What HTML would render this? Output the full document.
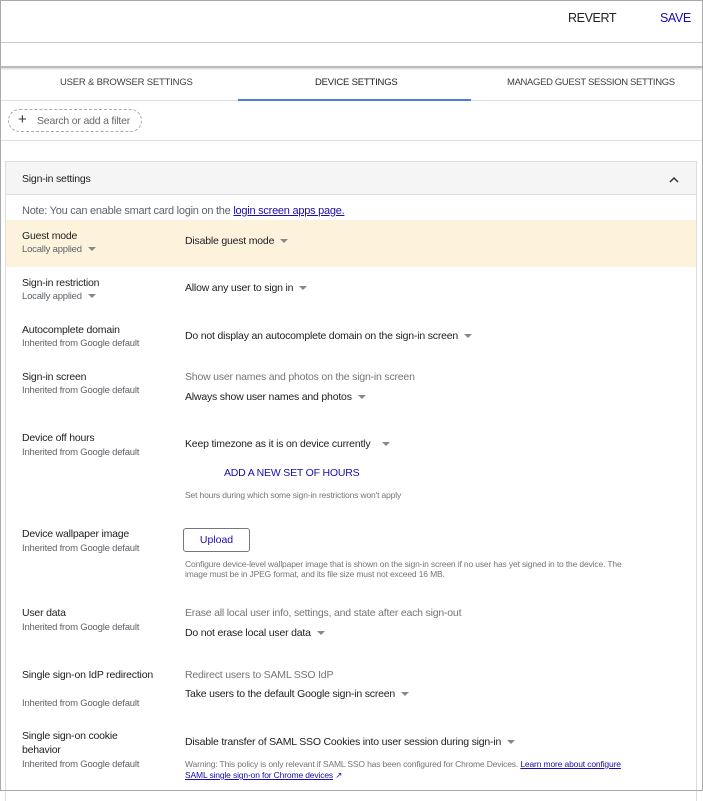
<!DOCTYPE html>
<html><head><style>
*{margin:0;padding:0;box-sizing:border-box}
body{width:703px;height:791px;background:#fff;font-family:"Liberation Sans",Arial,sans-serif;position:relative;overflow:hidden;color:#202124}
.a{position:absolute;white-space:nowrap;line-height:14px;letter-spacing:-0.2px}
.l{font-size:10.5px;color:#202124}
.s{font-size:9.5px;color:#5f6368}
.v{font-size:10.5px;color:#202124}
.g{font-size:10.5px;color:#757575}
.t{font-size:8.5px;color:#757575;letter-spacing:-0.15px}
.ar{display:inline-block;width:0;height:0;border-left:4px solid transparent;border-right:4px solid transparent;border-top:4px solid #888;margin-left:6px;vertical-align:middle}
.tab{font-size:9.5px;color:#3c4043;letter-spacing:-0.2px}
a{color:#1a0dab}
</style></head><body>
<div style="position:absolute;left:0;top:0;width:703px;height:791px;border:1px solid #aaa;z-index:5;pointer-events:none"></div>
<div class="a" style="left:568px;top:11px;font-size:12.5px;color:#202124;letter-spacing:-0.4px">REVERT</div>
<div class="a" style="left:660px;top:11px;font-size:12.5px;color:#1a0dab;letter-spacing:-0.4px">SAVE</div>
<div style="position:absolute;left:1px;top:42px;width:701px;height:1px;background:#ccc"></div>
<div style="position:absolute;left:1px;top:66px;width:701px;height:2px;background:#bbb;box-shadow:0 1px 2px #ccc"></div>
<div class="a tab" style="left:60px;top:76px">USER &amp; BROWSER SETTINGS</div>
<div class="a tab" style="left:315px;top:76px;color:#202124">DEVICE SETTINGS</div>
<div class="a tab" style="left:507px;top:76px;letter-spacing:-0.35px">MANAGED GUEST SESSION SETTINGS</div>
<div style="position:absolute;left:1px;top:100px;width:701px;height:1px;background:#ddd"></div>
<div style="position:absolute;left:238px;top:99px;width:233px;height:2px;background:#4a7fe0"></div>
<div style="position:absolute;left:8px;top:109px;width:134px;height:23px;border:1px dashed #aaa;border-radius:12px"></div>
<div class="a" style="left:18px;top:113px;font-size:15px;color:#333">+</div>
<div class="a" style="left:37px;top:114px;font-size:10.5px;color:#666">Search or add a filter</div>
<div style="position:absolute;left:1px;top:140px;width:701px;height:1px;background:#ddd"></div>
<div style="position:absolute;left:5px;top:161px;width:692px;height:640px;border:1px solid #ddd;border-bottom:none"></div>
<div style="position:absolute;left:6px;top:162px;width:690px;height:33px;background:#f5f5f5;border-bottom:1px solid #ddd"></div>
<div class="a" style="left:22px;top:172px;font-size:10.5px">Sign-in settings</div>
<svg style="position:absolute;left:669px;top:176px" width="10" height="7"><path d="M1 6 L5 2 L9 6" stroke="#333" stroke-width="1.5" fill="none"/></svg>
<div class="a" style="left:22px;top:204px;font-size:11px;color:#5f6368;letter-spacing:-0.25px">Note: You can enable smart card login on the <a style="color:#1a0dab;text-decoration:underline">login screen apps page.</a></div>
<div style="position:absolute;left:6px;top:220px;width:690px;height:47px;background:#fdf3dc"></div>

<div class="a l" style="left:22px;top:229px">Guest mode</div>
<div class="a s" style="left:22px;top:243px">Locally applied<span class="ar"></span></div>
<div class="a v" style="left:185px;top:234px">Disable guest mode<span class="ar"></span></div>

<div class="a l" style="left:22px;top:276px">Sign-in restriction</div>
<div class="a s" style="left:22px;top:290px">Locally applied<span class="ar"></span></div>
<div class="a v" style="left:185px;top:281px">Allow any user to sign in<span class="ar"></span></div>

<div class="a l" style="left:22px;top:323px">Autocomplete domain</div>
<div class="a s" style="left:22px;top:337px">Inherited from Google default</div>
<div class="a v" style="left:185px;top:329px">Do not display an autocomplete domain on the sign-in screen<span class="ar"></span></div>

<div class="a l" style="left:22px;top:370px">Sign-in screen</div>
<div class="a s" style="left:22px;top:384px">Inherited from Google default</div>
<div class="a g" style="left:185px;top:370px">Show user names and photos on the sign-in screen</div>
<div class="a v" style="left:185px;top:390px">Always show user names and photos<span class="ar"></span></div>

<div class="a l" style="left:22px;top:431px">Device off hours</div>
<div class="a s" style="left:22px;top:446px">Inherited from Google default</div>
<div class="a v" style="left:185px;top:437px">Keep timezone as it is on device currently<span class="ar" style="margin-left:12px"></span></div>
<div class="a" style="left:224px;top:466px;font-size:10.5px;color:#1a0dab">ADD A NEW SET OF HOURS</div>
<div class="a t" style="left:185px;top:488px">Set hours during which some sign-in restrictions won't apply</div>

<div class="a l" style="left:22px;top:527px">Device wallpaper image</div>
<div class="a s" style="left:22px;top:542px">Inherited from Google default</div>
<div style="position:absolute;left:183px;top:528px;width:67px;height:24px;border:1px solid #777;border-radius:3px;font-size:10.5px;color:#1a0dab;text-align:center;line-height:22px">Upload</div>
<div class="a t" style="left:185px;top:557px">Configure device-level wallpaper image that is shown on the sign-in screen if no user has yet signed in to the device. The</div>
<div class="a t" style="left:185px;top:567px">image must be in JPEG format, and its file size must not exceed 16 MB.</div>

<div class="a l" style="left:22px;top:606px">User data</div>
<div class="a s" style="left:22px;top:621px">Inherited from Google default</div>
<div class="a g" style="left:185px;top:606px">Erase all local user info, settings, and state after each sign-out</div>
<div class="a v" style="left:185px;top:626px">Do not erase local user data<span class="ar"></span></div>

<div class="a l" style="left:22px;top:668px">Single sign-on IdP redirection</div>
<div class="a s" style="left:22px;top:697px">Inherited from Google default</div>
<div class="a g" style="left:185px;top:668px">Redirect users to SAML SSO IdP</div>
<div class="a v" style="left:185px;top:687px">Take users to the default Google sign-in screen<span class="ar"></span></div>

<div class="a l" style="left:22px;top:729px">Single sign-on cookie</div>
<div class="a l" style="left:22px;top:743px">behavior</div>
<div class="a s" style="left:22px;top:758px">Inherited from Google default</div>
<div class="a v" style="left:185px;top:735px">Disable transfer of SAML SSO Cookies into user session during sign-in<span class="ar"></span></div>
<div class="a t" style="left:185px;top:757px">Warning: This policy is only relevant if SAML SSO has been configured for Chrome Devices. <a style="text-decoration:underline">Learn more about configure</a></div>
<div class="a t" style="left:185px;top:768px"><a style="text-decoration:underline">SAML single sign-on for Chrome devices</a> <span style="color:#1a0dab">&#x2197;</span></div>
</body></html>
